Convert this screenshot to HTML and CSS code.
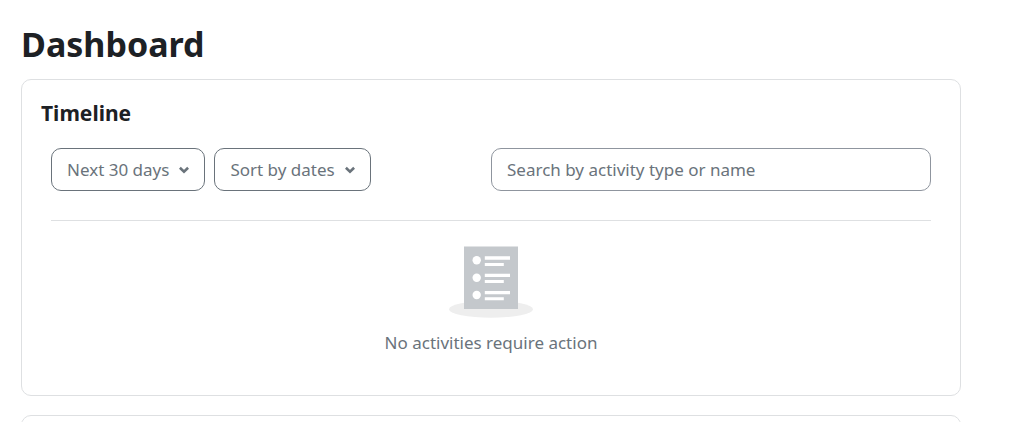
FILE: index.html
```html
<!DOCTYPE html>
<html lang="en">
<head>
<meta charset="utf-8">
<meta name="viewport" content="width=device-width, initial-scale=1">
<title>Dashboard</title>
<link rel="stylesheet" href="styles.css">
</head>
<body>
<main class="page">
  <h1 class="page-title">Dashboard</h1>
  <section class="card" aria-labelledby="timeline-title">
    <h2 class="card-title" id="timeline-title">Timeline</h2>
    <div class="card-content">
      <div class="toolbar">
        <div class="filters">
          <button class="filter" type="button" aria-haspopup="true">Next 30 days
            <svg class="chevron" viewBox="0 0 10 8" aria-hidden="true"><path d="M.9 1.8 5 5.7 9.1 1.8"/></svg>
          </button>
          <button class="filter" type="button" aria-haspopup="true">Sort by dates
            <svg class="chevron" viewBox="0 0 10 8" aria-hidden="true"><path d="M.9 1.8 5 5.7 9.1 1.8"/></svg>
          </button>
        </div>
        <input class="search" type="text" placeholder="Search by activity type or name" aria-label="Search by activity type or name">
      </div>
      <div class="empty">
        <svg class="empty-art" viewBox="0 0 84 72" aria-hidden="true">
          <ellipse cx="42" cy="63.3" rx="42" ry="8.4" fill="#eeeeee"/>
          <path fill="#c4c8cc" d="M15 .5h54V63H15z"/>
          <g fill="#ffffff">
            <circle cx="27.7" cy="14.2" r="4.2"/>
            <circle cx="27.7" cy="31.7" r="4.2"/>
            <circle cx="27.7" cy="49" r="4.2"/>
            <path d="M35.8 10.3H61v3.5H35.8zM35.8 16.9h19v3.1h-19zM35.8 27.7H61v3.4H35.8zM35.8 34h19v3.1h-19zM35.8 44.9H61v3.4H35.8zM35.8 51.2h19v3.1h-19z"/>
          </g>
        </svg>
        <p class="empty-text">No activities require action</p>
      </div>
    </div>
  </section>
  <section class="card card-next"></section>
</main>
</body>
</html>
```
FILE: styles.css
```css
* {
  box-sizing: border-box;
}

body {
  margin: 0;
  background: #ffffff;
  color: #1d2125;
  font: 17px/28px "Segoe UI", "Noto Sans", "Open Sans", sans-serif;
}

.page {
  height: 100vh;
  overflow: hidden;
  padding: 20px 56px 0 21px;
}

.page-title {
  margin: 0 0 11px;
  font-size: 34px;
  line-height: 48px;
  font-weight: 700;
}

.card {
  margin-bottom: 19px;
  padding: 19px;
  border: 1px solid #dee0e2;
  border-radius: 10px;
}

.card-title {
  margin: 0;
  font-size: 21px;
  line-height: 28px;
  font-weight: 700;
}

.card-content {
  padding: 21px 10px 19px;
}

.toolbar {
  display: grid;
  grid-template-columns: 1fr 1fr;
  padding-bottom: 29px;
  border-bottom: 1px solid #dee0e2;
}

.filters {
  display: flex;
  gap: 9px;
}

.filter,
.search {
  height: 43px;
  padding: 0 15px;
  border: 1px solid #6a737b;
  border-radius: 10px;
  background: #ffffff;
  color: #6a737b;
  font: inherit;
}

.filter {
  display: flex;
  align-items: center;
  gap: 10px;
  white-space: nowrap;
}

.chevron {
  width: 10px;
  height: 8px;
  fill: none;
  stroke: #6a737b;
  stroke-width: 2.6;
}

.search {
  width: 100%;
  min-width: 0;
  border-color: #8f959e;
}

.search::placeholder {
  color: #6a737b;
  opacity: 1;
}

.empty {
  display: flex;
  flex-direction: column;
  align-items: center;
  gap: 11px;
  padding-top: 25px;
}

.empty-art {
  width: 84px;
  height: 72px;
}

.empty-text {
  margin: 0;
  color: #6a737b;
}
```
